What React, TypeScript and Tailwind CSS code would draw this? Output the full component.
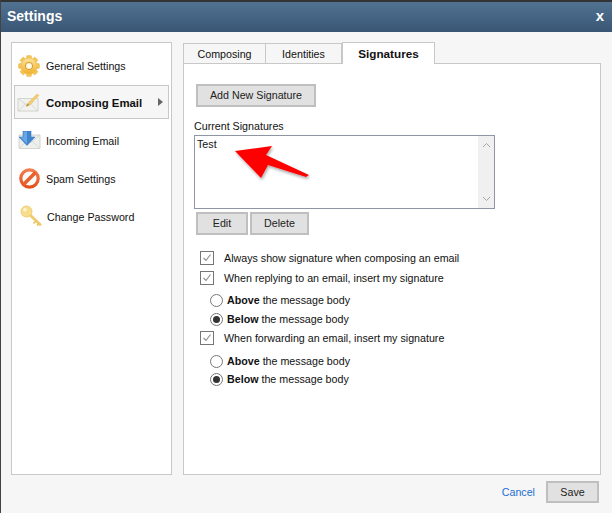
import React from "react";

function Gear() {
  const teeth = [0, 45, 90, 135, 180, 225, 270, 315];
  return (
    <svg width="22" height="22" viewBox="0 0 22 22">
      <defs>
        <linearGradient id="g1" x1="0" y1="0" x2="0" y2="1">
          <stop offset="0" stopColor="#fde39a" />
          <stop offset="1" stopColor="#f3b02c" />
        </linearGradient>
      </defs>
      {teeth.map((a) => (
        <rect key={a} x="8.5" y="0.5" width="5" height="5" rx="1" fill="#f6c44f" stroke="#e6b95a" strokeWidth="0.5" transform={`rotate(${a} 11 11)`} />
      ))}
      <circle cx="11" cy="11" r="8" fill="url(#g1)" stroke="#e8b850" strokeWidth="0.6" />
      <circle cx="11" cy="11" r="3.6" fill="#fff9e6" stroke="#d09a2c" strokeWidth="1" />
    </svg>
  );
}

function MailPencil() {
  return (
    <svg width="24" height="20" viewBox="0 0 24 20">
      <path d="M1 6.5H21V19H1Z" fill="#f1f2ee" stroke="#c9ccc7" strokeWidth="0.8" />
      <path d="M1 19L9 11.5M21 19L13 11.5M1 6.5L11 14L17 9.5" fill="none" stroke="#cfd2cd" strokeWidth="0.8" />
      <path d="M9 14.5L10.5 11.5L20 2L22 3.5L12.5 13Z" fill="#f3cd70" stroke="#e2b655" strokeWidth="0.5" />
      <path d="M9 14.5L10.5 11.5L12.5 13Z" fill="#b29558" />
    </svg>
  );
}

function MailDown() {
  return (
    <svg width="23" height="18" viewBox="0 0 23 18">
      <path d="M1 4H22V17.5H1Z" fill="#eef0ee" stroke="#c9ccc7" strokeWidth="0.8" />
      <path d="M1 17.5L9 10M22 17.5L14 10M12 12L22 4" fill="none" stroke="#cfd2cd" strokeWidth="0.8" />
      <path d="M5 0H13V6H17L9 14.5L1 6H5Z" fill="#3f86d1" stroke="#2f6fb4" strokeWidth="0.5" />
      <path d="M5.5 0.5H9V13L2.5 6.3H5.5Z" fill="#6aa6e4" />
    </svg>
  );
}

function NoSign() {
  return (
    <svg width="21" height="21" viewBox="0 0 21 21">
      <defs>
        <linearGradient id="g2" x1="0" y1="0" x2="0" y2="1">
          <stop offset="0" stopColor="#f47c4e" />
          <stop offset="1" stopColor="#e2501e" />
        </linearGradient>
      </defs>
      <circle cx="10.5" cy="10.5" r="8.7" fill="#fbfaf6" stroke="url(#g2)" strokeWidth="3.2" />
      <path d="M4.5 16.5L16.5 4.5" stroke="#e9602c" strokeWidth="3.6" />
    </svg>
  );
}

function Key() {
  return (
    <svg width="22" height="22" viewBox="0 0 22 22">
      <path d="M8 8L20 19.5" stroke="#f0cc70" strokeWidth="3" strokeLinecap="round" />
      <path d="M16 16L13.5 18.5M19 18.5L17 20.5" stroke="#e8c262" strokeWidth="1.6" />
      <circle cx="6.5" cy="6.5" r="5.5" fill="#f8dd8c" stroke="#eac566" strokeWidth="0.8" />
      <circle cx="5" cy="4.8" r="1.7" fill="#fdf6d8" />
    </svg>
  );
}

function Side({ icon, label, active, cls = "", ic = "", tc = "pt-[2px]" }: { icon: React.ReactNode; label: string; active?: boolean; cls?: string; ic?: string; tc?: string }) {
  return (
    <div className={`relative flex items-center mx-[2px] ${cls} ${active ? "h-[34px] border border-[#c8c8c8] bg-[#f6f6f6] font-bold text-[11.4px]" : "h-[38px] border border-transparent"}`}>
      <div className={`w-[31px] flex justify-center shrink-0 ${ic}`}>{icon}</div>
      <span className={tc}>{label}</span>
      {active && <span className="absolute right-[5px] top-[12px] w-0 h-0 border-y-[4px] border-y-transparent border-l-[5px] border-l-[#666]" />}
    </div>
  );
}

function Check({ label, cls = "" }: { label: string; cls?: string }) {
  return (
    <div className={`flex items-center h-[18px] ${cls}`}>
      <svg width="14" height="14" viewBox="0 0 14 14" className="shrink-0 mr-[10px]">
        <rect x="0.5" y="0.5" width="13" height="13" fill="#fff" stroke="#767676" />
        <path d="M3.5 7L6 9.5L10.5 3.5" fill="none" stroke="#8a8a8a" strokeWidth="1.1" />
      </svg>
      <span>{label}</span>
    </div>
  );
}

function Radio({ bold, on, cls = "" }: { bold: string; on?: boolean; cls?: string }) {
  return (
    <div className={`flex items-center h-[18px] pl-[10px] ${cls}`}>
      <span className="w-[13px] h-[13px] rounded-full border border-[#767676] bg-white flex items-center justify-center mr-[4px] shrink-0">
        {on && <span className="w-[7px] h-[7px] rounded-full bg-[#333]" />}
      </span>
      <span><b>{bold}</b> the message body</span>
    </div>
  );
}

function Btn({ children, cls }: { children: React.ReactNode; cls: string }) {
  return (
    <div className={`flex items-center justify-center bg-[#e1e1e1] border-2 border-[#bfbfbf] text-[#222] ${cls}`}>{children}</div>
  );
}

export default function App() {
  return (
    <div className="relative w-[612px] h-[513px] overflow-hidden bg-[#f6f6f6] border-l border-[#444] border-t-2 border-t-[#333] text-[10.7px] text-[#111]" style={{ fontFamily: '"Liberation Sans", sans-serif' }}>
      <div className="h-[30px] bg-gradient-to-b from-[#527292] to-[#395674] flex items-center justify-between pl-[6px] pr-[8px] pb-[2px] text-white font-bold">
        <span className="text-[14px]">Settings</span>
        <span className="text-[15px] leading-[16px]">x</span>
      </div>
      <div className="flex pt-[10px] pl-[10px]">
        <div className="w-[161px] h-[433px] bg-white border border-[#c8c8c8] pt-[4px] shrink-0">
          <Side icon={<Gear />} label="General Settings" ic="pr-[3px]" tc="pt-0" />
          <Side icon={<MailPencil />} label="Composing Email" active ic="pr-[4px]" tc="pt-[4px]" />
          <Side icon={<MailDown />} label="Incoming Email" cls="mt-[2px]" ic="pr-[2px]" />
          <Side icon={<NoSign />} label="Spam Settings" ic="pr-[2px]" />
          <Side icon={<Key />} label="Change Password" tc="pt-[2px] pl-[1px]" />
        </div>
        <div className="ml-[11px] w-[418px] h-[433px] flex flex-col">
          <div className="flex h-[21px] items-end">
            <div className="w-[83px] h-[20px] pt-[2px] border border-b-0 border-[#c8c8c8] flex items-center justify-center">Composing</div>
            <div className="w-[76px] h-[20px] pt-[2px] border-t border-r border-[#c8c8c8] flex items-center justify-center">Identities</div>
            <div className="w-[93px] h-[22px] -mb-px z-10 bg-white border border-b-0 border-[#c8c8c8] flex items-center justify-center font-bold text-[11.7px]">Signatures</div>
          </div>
          <div className="flex-1 bg-white border border-[#c8c8c8] pl-[10px] pt-[20px]">
            <Btn cls="ml-[2px] w-[120px] h-[23px]">Add New Signature</Btn>
            <div className="mt-[12px] h-[15px] leading-[15px]">Current Signatures</div>
            <div className="mt-[1px] w-[301px] h-[74px] border border-[#8f96a3] flex">
              <div className="flex-1 pl-[2px] leading-[15px] pt-[1px]">Test</div>
              <div className="w-[16px] bg-[#f0f0f0] flex flex-col justify-between items-center py-[6px] text-[#a6a6a6]">
                <svg width="9" height="6" viewBox="0 0 9 6"><path d="M1 5L4.5 1.5L8 5" fill="none" stroke="currentColor" /></svg>
                <svg width="9" height="6" viewBox="0 0 9 6"><path d="M1 1L4.5 4.5L8 1" fill="none" stroke="currentColor" /></svg>
              </div>
            </div>
            <div className="flex mt-[3px] ml-[2px] gap-[2px]">
              <Btn cls="w-[52px] h-[23px]">Edit</Btn>
              <Btn cls="w-[59px] h-[23px]">Delete</Btn>
            </div>
            <div className="mt-[14px] ml-[6px]">
              <Check label="Always show signature when composing an email" />
              <Check label="When replying to an email, insert my signature" cls="mt-[2px]" />
              <Radio bold="Above" cls="mt-[4px]" />
              <Radio bold="Below" on cls="mt-[1px]" />
              <Check label="When forwarding an email, insert my signature" cls="mt-[1px]" />
              <Radio bold="Above" cls="mt-[5px]" />
              <Radio bold="Below" on />
            </div>
          </div>
        </div>
      </div>
      <div className="flex justify-end items-center pr-[13px] mt-[6px]">
        <span className="text-[#1a6fd0] mr-[11px]">Cancel</span>
        <Btn cls="w-[53px] h-[22px]">Save</Btn>
      </div>
      <svg className="absolute left-[228px] top-[139px]" width="90" height="45" viewBox="229 141 90 45">
        <defs>
          <filter id="sh" x="-20%" y="-20%" width="140%" height="150%">
            <feDropShadow dx="1" dy="2" stdDeviation="1.5" floodColor="#000" floodOpacity="0.35" />
          </filter>
        </defs>
        <path d="M235 151L272 146L266 155L309 175L306 177L268 165L261 178Z" fill="#fe0000" filter="url(#sh)" />
      </svg>
    </div>
  );
}
